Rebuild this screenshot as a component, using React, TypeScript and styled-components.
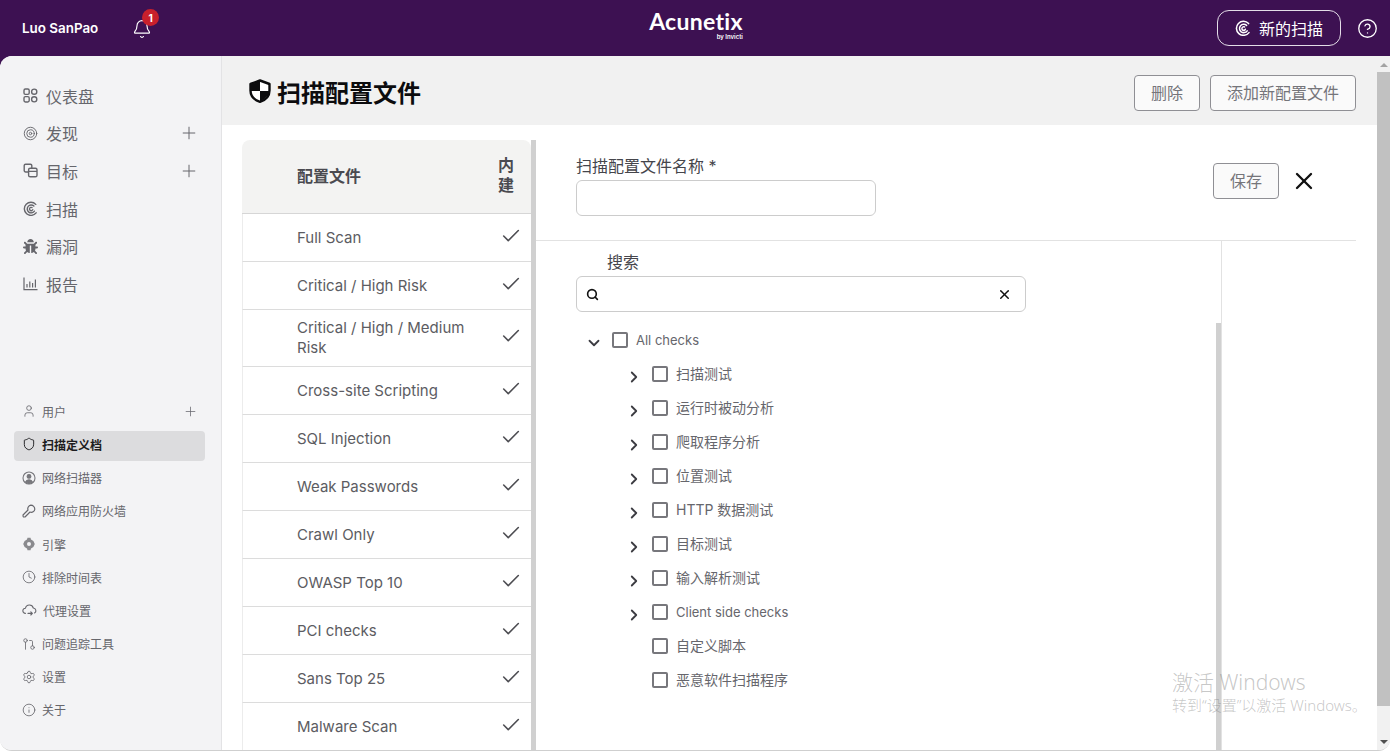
import React from 'react';
import styled, { createGlobalStyle } from 'styled-components';
import {
  Bell,
  Check,
  ChevronDown,
  ChevronRight,
  CircleHelp,
  Clock,
  GitPullRequest,
  Info,
  Plus,
  Search,
  Settings,
  Shield,
  Target,
  User,
  X,
} from 'lucide-react';
import { FaBug } from 'react-icons/fa';

const GlobalStyle = createGlobalStyle`
  html, body {
    margin: 0;
    height: 100%;
    overflow: hidden;
    background: #fff;
    font-family: Inter, "Noto Sans CJK SC", sans-serif;
  }
  * {
    box-sizing: border-box;
  }
`;

const Shell = styled.div`
  height: 752px;
  display: flex;
  flex-direction: column;
  background: linear-gradient(#3d1152 0 100px, #fff 100px);
`;

const TopBar = styled.header`
  height: 56px;
  flex: none;
  display: grid;
  grid-template-columns: 1fr auto 1fr;
  align-items: center;
  padding: 0 12px 0 22px;
  color: #fff;
`;

const TopLeft = styled.div`
  display: flex;
  align-items: center;
  gap: 34px;
`;

const UserName = styled.span`
  font-size: 13.4px;
  font-weight: 600;
`;

const BellWrap = styled.div`
  position: relative;
  display: flex;
  width: 20px;
  height: 20px;
  margin-top: 2px;
`;

const Badge = styled.span`
  position: absolute;
  top: -10px;
  left: 10px;
  width: 17px;
  height: 17px;
  border-radius: 50%;
  background: #c8202c;
  color: #fff;
  font-size: 10px;
  font-weight: 700;
  display: flex;
  align-items: center;
  justify-content: center;
`;

const Logo = styled.div`
  display: flex;
  flex-direction: column;
  align-items: flex-end;
  margin: -8px 8px 0 0;
`;

const LogoName = styled.span`
  font-family: Lato, sans-serif;
  font-size: 23px;
  font-weight: 700;
  line-height: 24px;
  letter-spacing: 0.3px;
`;

const LogoBy = styled.span`
  font-size: 6px;
  font-weight: 600;
  line-height: 7px;
`;

const TopRight = styled.div`
  display: flex;
  justify-content: flex-end;
  align-items: center;
  gap: 16px;
`;

const NewScan = styled.button`
  width: 124px;
  height: 36px;
  border: 1px solid #e4dde8;
  border-radius: 12px;
  background: transparent;
  color: #fff;
  font: inherit;
  font-size: 16px;
  display: flex;
  align-items: center;
  justify-content: center;
  gap: 8px;
`;

const Main = styled.div`
  height: 695px;
  display: flex;
  border-radius: 12px 0 12px 12px;
  border-bottom: 1px solid #cfcfcf;
  overflow: hidden;
  background: #fff;
`;

const Sidebar = styled.nav`
  width: 222px;
  flex: none;
  background: #f3f3f5;
  border-right: 1px solid #e3e3e5;
  padding: 21px 22px 0 23px;
  display: flex;
  flex-direction: column;
`;

const MainItem = styled.div`
  height: 37.6px;
  flex: none;
  display: flex;
  align-items: center;
  gap: 8px;
  color: #66666c;
  font-size: 16px;
`;

const ItemText = styled.span`
  flex: 1;
`;

const LowerNav = styled.div`
  margin: 92px -6px 0 -9px;
  display: flex;
  flex-direction: column;
`;

const SubItem = styled.div<{ $active?: boolean }>`
  height: 30px;
  margin-top: 3.2px;
  flex: none;
  padding: 0 7px 3px 8px;
  display: flex;
  align-items: center;
  gap: 6px;
  border-radius: 4px;
  font-size: 12px;
  font-weight: ${p => (p.$active ? 700 : 400)};
  color: ${p => (p.$active ? '#1d1d20' : '#66666c')};
  background: ${p => (p.$active ? '#dcdcde' : 'transparent')};
`;

const Page = styled.main`
  flex: 1;
  min-width: 0;
  display: flex;
  flex-direction: column;
`;

const PageHead = styled.div`
  height: 69px;
  flex: none;
  background: #f1f1f1;
  padding: 5px 21px 0 27px;
  display: flex;
  align-items: center;
  justify-content: space-between;
`;

const Title = styled.h1`
  margin: 0 0 4px;
  display: flex;
  align-items: center;
  gap: 6px;
  font-size: 24px;
  font-weight: 700;
  color: #0c0c0e;
`;

const HeadActions = styled.div`
  display: flex;
  gap: 10px;
`;

const OutlineButton = styled.button<{ $width: number }>`
  width: ${p => p.$width}px;
  height: 36px;
  border: 1px solid #8f8f94;
  border-radius: 4px;
  background: #fafafa;
  color: #75757a;
  font: inherit;
  font-size: 16px;
  padding: 0 0 3px;
`;

const Body = styled.div`
  flex: 1;
  min-height: 0;
  display: flex;
  padding: 15px 21px 0 20px;
`;

const ProfileList = styled.section`
  width: 289px;
  flex: none;
  overflow: hidden;
`;

const ListHead = styled.div`
  height: 74px;
  background: #f3f3f2;
  border-bottom: 1px solid #d6d6d6;
  border-radius: 8px 8px 0 0;
  display: flex;
  align-items: center;
  padding: 0 16px 4px 55px;
  font-size: 16px;
  font-weight: 600;
  color: #4a4a50;
`;

const HeadName = styled.span`
  flex: 1;
`;

const HeadBuilt = styled.span`
  width: 17px;
  line-height: 20px;
`;

const ProfileRow = styled.div<{ $tall?: boolean }>`
  height: ${p => (p.$tall ? 57 : 48)}px;
  border-bottom: 1px solid #dcdcdc;
  border-left: 1px solid #ececec;
  display: flex;
  align-items: center;
  padding: 0 9px 0 54px;
  font-size: 15px;
  line-height: 20px;
  color: #5c5c62;
`;

const ProfileName = styled.span`
  flex: 1;
  padding-right: 24px;
`;

const RowCheck = styled(Check)`
  flex: none;
  margin-bottom: 4px;
  color: #4d4d52;
`;

const SplitBar = styled.div`
  width: 5px;
  flex: none;
  background: #d0d0d0;
`;

const Detail = styled.section`
  flex: 1;
  min-width: 0;
  display: flex;
  flex-direction: column;
`;

const FormHead = styled.div`
  height: 101px;
  flex: none;
  border-bottom: 1px solid #e2e2e2;
  padding: 14px 38px 0 40px;
  display: flex;
  justify-content: space-between;
`;

const FieldLabel = styled.div`
  font-size: 16px;
  line-height: 24px;
  color: #45454b;
`;

const NameInput = styled.div`
  width: 300px;
  height: 36px;
  margin-top: 2px;
  border: 1px solid #ccc;
  border-radius: 6px;
`;

const FormActions = styled.div`
  display: flex;
  align-items: center;
  gap: 11px;
  height: 36px;
  margin-top: 9px;
`;

const CloseWrap = styled.span`
  display: flex;
  color: #111;
`;

const Lower = styled.div`
  flex: 1;
  min-height: 0;
  display: flex;
`;

const TreePane = styled.div`
  width: 680px;
  flex: none;
  padding: 9px 0 0 40px;
`;

const SearchLabel = styled.div`
  font-size: 16px;
  line-height: 24px;
  margin-bottom: 2px;
  padding-left: 31px;
  color: #45454b;
`;

const SearchBox = styled.div`
  width: 450px;
  height: 36px;
  border: 1px solid #ccc;
  border-radius: 6px;
  display: flex;
  align-items: center;
  justify-content: space-between;
  padding: 0 13px 0 9px;
  color: #111;
`;

const Tree = styled.div`
  margin-top: 11px;
`;

const TreeRow = styled.div<{ $child?: boolean }>`
  height: 34px;
  display: flex;
  align-items: center;
  padding-left: ${p => (p.$child ? 76 : 36)}px;
  color: #66666c;
`;

const TreeLabel = styled.span<{ $cjk?: boolean }>`
  font-size: ${p => (p.$cjk ? 14 : 13)}px;
  margin-bottom: ${p => (p.$cjk ? 2 : 0)}px;
`;

const Caret = styled.span`
  position: relative;
  width: 0;
  height: 16px;
`;

const CaretIcon = styled.span`
  position: absolute;
  left: -27px;
  top: 2px;
  display: flex;
  color: #3c3c42;
`;

const CheckBox = styled.span`
  width: 16px;
  height: 16px;
  flex: none;
  border: 2px solid #77777c;
  border-radius: 2px;
  margin-right: 8px;
`;

const TreeRail = styled.div`
  width: 5px;
  flex: none;
  padding-top: 82px;
  display: flex;
`;

const TreeThumb = styled.div`
  flex: 1;
  background: #d0d0d0;
`;

const SideCol = styled.div`
  flex: 1;
  border-left: 1px solid #e2e2e2;
`;

const PageScroll = styled.div`
  width: 13px;
  flex: none;
  background: #f1f1f1;
  display: flex;
  flex-direction: column;
  align-items: center;
`;

const Arrow = styled.span<{ $down?: boolean }>`
  flex: none;
  width: 0;
  height: 0;
  margin: ${p => (p.$down ? '0 0 6px' : '7px 0 5px')};
  border-left: 4px solid transparent;
  border-right: 4px solid transparent;
  border-${p => (p.$down ? 'top' : 'bottom')}: 4px solid ${p => (p.$down ? '#505050' : '#a3a3a3')};
`;

const PageThumb = styled.div`
  width: 100%;
  height: 634px;
  flex: none;
  background: #c1c1c1;
`;

const ScrollGap = styled.div`
  flex: 1;
`;

const Watermark = styled.div`
  position: absolute;
  left: 1172px;
  top: 669px;
  color: rgba(120, 120, 120, 0.42);
  font-family: "Noto Sans", "Noto Sans CJK SC", sans-serif;
  font-weight: 300;
  pointer-events: none;
`;

const WatermarkTitle = styled.div`
  font-size: 21px;
  line-height: 26px;
`;

const WatermarkSub = styled.div`
  font-size: 15px;
  line-height: 20px;
`;

const ScanGlyph = ({ size = 16 }: { size?: number }) => (
  <svg width={size} height={size} viewBox="0 0 16 16" fill="none" stroke="currentColor" strokeWidth="1.5" strokeLinecap="round">
    <path d="M13.6 3.6A7 7 0 1 0 14 12.6" />
    <path d="M11.6 5.4A4.2 4.2 0 1 0 12.2 10.8" />
    <path d="M9.6 7A1.8 1.8 0 1 0 10.4 9.2" />
  </svg>
);

const DashGlyph = () => (
  <svg width="15" height="15" viewBox="0 0 15 15" fill="none" stroke="currentColor" strokeWidth="1.4">
    <rect x="1" y="1" width="5.2" height="5.4" rx="1.4" />
    <rect x="1" y="8.6" width="5.2" height="5.4" rx="1.4" />
    <circle cx="11.2" cy="3.7" r="2.6" />
    <circle cx="11.2" cy="11.3" r="2.6" />
  </svg>
);

const TargetsGlyph = () => (
  <svg width="15" height="15" viewBox="0 0 15 15" fill="none" stroke="currentColor" strokeWidth="1.4">
    <path d="M6 9H2.6A1.4 1.4 0 0 1 1.2 7.6V2.6A1.4 1.4 0 0 1 2.6 1.2H7.4A1.4 1.4 0 0 1 8.8 2.6V5" />
    <rect x="5.6" y="5.2" width="8.4" height="8.6" rx="1.6" />
    <path d="M5.6 8.4H14" />
  </svg>
);

const ReportGlyph = () => (
  <svg width="15" height="15" viewBox="0 0 15 15" fill="none" stroke="currentColor" strokeWidth="1.2">
    <path d="M1 1.5V13.6H14.5" />
    <path d="M4 11.5V8M6.8 11.5V5.5M9.6 11.5V7M12.4 11.5V3.5" />
  </svg>
);

const KeyGlyph = () => (
  <svg width="14" height="14" viewBox="0 0 14 14" fill="none" stroke="currentColor" strokeWidth="1.2" strokeLinejoin="round">
    <path d="M8.8 1.2A4 4 0 0 1 12.8 5.2A3.4 3.4 0 0 1 8 8L3 13L1.2 12.8L1 11L6 6A3.6 3.6 0 0 1 8.8 1.2Z" />
  </svg>
);

const ScannerGlyph = () => (
  <svg width="14" height="14" viewBox="0 0 14 14" fill="none" stroke="#77777c" strokeWidth="1.1">
    <circle cx="7" cy="7" r="6" />
    <circle cx="7" cy="5.4" r="1.9" fill="#77777c" />
    <path d="M3.6 11C4.2 9.4 5.4 8.8 7 8.8C8.6 8.8 9.8 9.4 10.4 11L7 12.6Z" fill="#77777c" />
  </svg>
);

const EngineGlyph = () => (
  <svg width="14" height="14" viewBox="0 0 14 14" fill="#8a8a8e">
    <path d="M5.5 0.8H8.5L9 2.6L11.4 3.9L12.8 7L11.4 10.1L9 11.4L8.5 13.2H5.5L5 11.4L2.6 10.1L1.2 7L2.6 3.9L5 2.6Z" />
    <circle cx="7" cy="7" r="2" fill="#f3f3f5" />
  </svg>
);

const ProxyGlyph = () => (
  <svg width="15" height="14" viewBox="0 0 15 14" fill="none" stroke="currentColor" strokeWidth="1.1" strokeLinecap="round" strokeLinejoin="round">
    <path d="M3.4 10.4A2.6 2.6 0 0 1 3.5 5.2A4 4 0 0 1 11.3 5A2.7 2.7 0 0 1 12.6 10" />
    <path d="M6 10.4H10.2M8.8 8.8L10.4 10.4L8.8 12" />
  </svg>
);

const HalfShield = () => (
  <svg width="22" height="24" viewBox="0 0 22 24">
    <path d="M11 1.5L20.5 5V11.5C20.5 17 16.6 21 11 22.8C5.4 21 1.5 17 1.5 11.5V5Z" fill="#fff" stroke="#0c0c0e" strokeWidth="2.4" strokeLinejoin="round" />
    <path d="M11 2V12H2V5.4ZM11 12H20V12.5C19.4 17 16 20.4 11 22.2Z" fill="#0c0c0e" />
  </svg>
);

const mainItems = [
  { label: '仪表盘', icon: <DashGlyph /> },
  { label: '发现', icon: <Target size={15} strokeWidth={1.5} />, add: true },
  { label: '目标', icon: <TargetsGlyph />, add: true },
  { label: '扫描', icon: <ScanGlyph size={15} /> },
  { label: '漏洞', icon: <FaBug size={15} /> },
  { label: '报告', icon: <ReportGlyph /> },
];

const subItems = [
  { label: '用户', icon: <User size={14} strokeWidth={1.4} />, add: true },
  { label: '扫描定义档', icon: <Shield size={14} strokeWidth={1.6} />, active: true },
  { label: '网络扫描器', icon: <ScannerGlyph /> },
  { label: '网络应用防火墙', icon: <KeyGlyph /> },
  { label: '引擎', icon: <EngineGlyph /> },
  { label: '排除时间表', icon: <Clock size={14} strokeWidth={1.4} /> },
  { label: '代理设置', icon: <ProxyGlyph /> },
  { label: '问题追踪工具', icon: <GitPullRequest size={14} strokeWidth={1.4} /> },
  { label: '设置', icon: <Settings size={14} strokeWidth={1.4} /> },
  { label: '关于', icon: <Info size={14} strokeWidth={1.4} /> },
];

const profiles = [
  'Full Scan',
  'Critical / High Risk',
  'Critical / High / Medium Risk',
  'Cross-site Scripting',
  'SQL Injection',
  'Weak Passwords',
  'Crawl Only',
  'OWASP Top 10',
  'PCI checks',
  'Sans Top 25',
  'Malware Scan',
];

const checks = [
  { label: '扫描测试', more: true, cjk: true },
  { label: '运行时被动分析', more: true, cjk: true },
  { label: '爬取程序分析', more: true, cjk: true },
  { label: '位置测试', more: true, cjk: true },
  { label: 'HTTP 数据测试', more: true, cjk: true },
  { label: '目标测试', more: true, cjk: true },
  { label: '输入解析测试', more: true, cjk: true },
  { label: 'Client side checks', more: true },
  { label: '自定义脚本', cjk: true },
  { label: '恶意软件扫描程序', cjk: true },
];

const App = () => (
  <Shell>
    <GlobalStyle />
    <TopBar>
      <TopLeft>
        <UserName>Luo SanPao</UserName>
        <BellWrap>
          <Bell size={20} strokeWidth={1.4} />
          <Badge>1</Badge>
        </BellWrap>
      </TopLeft>
      <Logo>
        <LogoName>Acunetix</LogoName>
        <LogoBy>by Invicti</LogoBy>
      </Logo>
      <TopRight>
        <NewScan>
          <ScanGlyph />
          新的扫描
        </NewScan>
        <CircleHelp size={21} strokeWidth={1.5} />
      </TopRight>
    </TopBar>
    <Main>
      <Sidebar>
        {mainItems.map(item => (
          <MainItem key={item.label}>
            {item.icon}
            <ItemText>{item.label}</ItemText>
            {item.add && <Plus size={20} strokeWidth={1.2} />}
          </MainItem>
        ))}
        <LowerNav>
          {subItems.map(item => (
            <SubItem key={item.label} $active={item.active}>
              {item.icon}
              <ItemText>{item.label}</ItemText>
              {item.add && <Plus size={15} strokeWidth={1.2} />}
            </SubItem>
          ))}
        </LowerNav>
      </Sidebar>
      <Page>
        <PageHead>
          <Title>
            <HalfShield />
            扫描配置文件
          </Title>
          <HeadActions>
            <OutlineButton $width={66}>删除</OutlineButton>
            <OutlineButton $width={146}>添加新配置文件</OutlineButton>
          </HeadActions>
        </PageHead>
        <Body>
          <ProfileList>
            <ListHead>
              <HeadName>配置文件</HeadName>
              <HeadBuilt>内建</HeadBuilt>
            </ListHead>
            {profiles.map(name => (
              <ProfileRow key={name} $tall={name.includes('Medium')}>
                <ProfileName>{name}</ProfileName>
                <RowCheck size={22} strokeWidth={1.7} />
              </ProfileRow>
            ))}
          </ProfileList>
          <SplitBar />
          <Detail>
            <FormHead>
              <div>
                <FieldLabel>扫描配置文件名称 *</FieldLabel>
                <NameInput />
              </div>
              <FormActions>
                <OutlineButton $width={66}>保存</OutlineButton>
                <CloseWrap>
                  <X size={28} strokeWidth={2} />
                </CloseWrap>
              </FormActions>
            </FormHead>
            <Lower>
              <TreePane>
                <SearchLabel>搜索</SearchLabel>
                <SearchBox>
                  <Search size={13} strokeWidth={3} />
                  <X size={15} strokeWidth={2.4} />
                </SearchBox>
                <Tree>
                  <TreeRow>
                    <Caret>
                      <CaretIcon>
                        <ChevronDown size={18} strokeWidth={2.4} />
                      </CaretIcon>
                    </Caret>
                    <CheckBox />
                    <TreeLabel>All checks</TreeLabel>
                  </TreeRow>
                  {checks.map(check => (
                    <TreeRow key={check.label} $child>
                      {check.more && (
                        <Caret>
                          <CaretIcon>
                            <ChevronRight size={18} strokeWidth={2.4} />
                          </CaretIcon>
                        </Caret>
                      )}
                      <CheckBox />
                      <TreeLabel $cjk={check.cjk}>{check.label}</TreeLabel>
                    </TreeRow>
                  ))}
                </Tree>
              </TreePane>
              <TreeRail>
                <TreeThumb />
              </TreeRail>
              <SideCol />
            </Lower>
          </Detail>
        </Body>
      </Page>
      <PageScroll>
        <Arrow />
        <PageThumb />
        <ScrollGap />
        <Arrow $down />
      </PageScroll>
    </Main>
    <Watermark>
      <WatermarkTitle>激活 Windows</WatermarkTitle>
      <WatermarkSub>转到“设置”以激活 Windows。</WatermarkSub>
    </Watermark>
  </Shell>
);

export default App;
